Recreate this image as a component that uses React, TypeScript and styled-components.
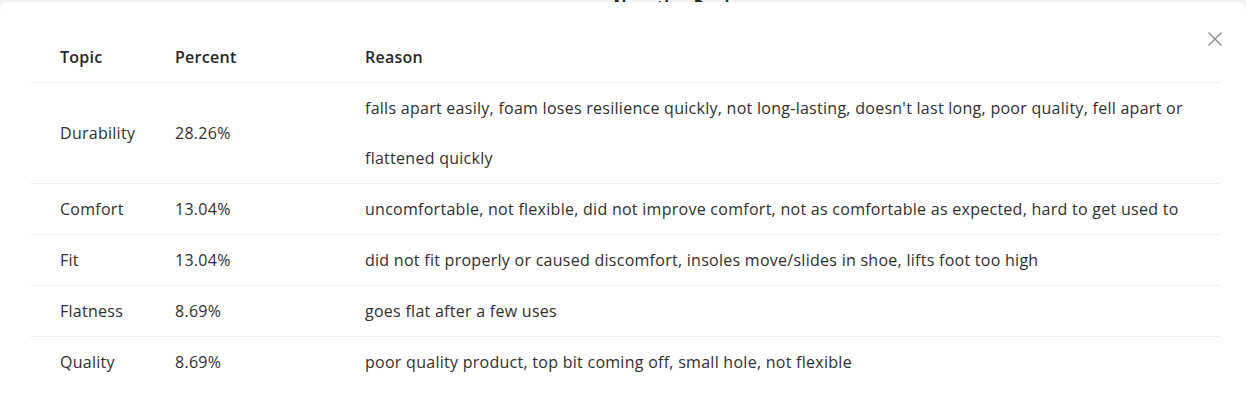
import React from "react";
import styled, { createGlobalStyle } from "styled-components";

const Global = createGlobalStyle`
  html, body { margin: 0; padding: 0; background: #f2f2f2; }
  body { font-family: "Open Sans", "Noto Sans", sans-serif; color: #333; }
`;

const Backdrop = styled.div`
  width: 1246px;
  height: 417px;
  overflow: hidden;
  display: flex;
  flex-direction: column;
`;

const PeekStrip = styled.div`
  height: 2px;
  overflow: hidden;
  display: flex;
  align-items: flex-end;
  justify-content: center;
  padding-left: 130px;
`;

const PeekText = styled.span`
  font-size: 16px;
  line-height: 16px;
  font-weight: 700;
  color: #222;
  margin-bottom: -12px;
  letter-spacing: 0.5px;
`;

const Modal = styled.div`
  flex: 1;
  background: #fff;
  border-radius: 8px 8px 0 0;
  padding: 30px 23px 0 30px;
  display: flex;
  flex-direction: column;
`;

const CloseButton = styled.button`
  align-self: flex-end;
  margin: -1px 0 -15px 0;
  width: 16px;
  height: 16px;
  padding: 0;
  border: none;
  background: none;
  cursor: pointer;
  display: flex;
  align-items: center;
  justify-content: center;
  position: relative;
  z-index: 1;
`;

const Table = styled.table`
  width: 1190px;
  border-collapse: collapse;
  table-layout: fixed;
  font-size: 16px;
  letter-spacing: 0.27px;
`;

const HeadCell = styled.th<{ $w?: number }>`
  text-align: left;
  font-weight: 600;
  color: #262626;
  height: 50px;
  padding: 0 30px;
  line-height: 50px;
  border-bottom: 1px solid #efefef;
  ${(p) => (p.$w ? `width: ${p.$w}px;` : "")}
  box-sizing: border-box;
`;

const Row = styled.tr<{ $last?: boolean }>`
  border-bottom: ${(p) => (p.$last ? "none" : "1px solid #efefef")};
`;

const Cell = styled.td`
  padding: 0 20px 0 30px;
  line-height: 50px;
  color: #2f2f2f;
  vertical-align: middle;
`;

const rows = [
  {
    topic: "Durability",
    pct: "28.26%",
    reason:
      "falls apart easily, foam loses resilience quickly, not long-lasting, doesn't last long, poor quality, fell apart or flattened quickly",
  },
  {
    topic: "Comfort",
    pct: "13.04%",
    reason:
      "uncomfortable, not flexible, did not improve comfort, not as comfortable as expected, hard to get used to",
  },
  {
    topic: "Fit",
    pct: "13.04%",
    reason:
      "did not fit properly or caused discomfort, insoles move/slides in shoe, lifts foot too high",
  },
  { topic: "Flatness", pct: "8.69%", reason: "goes flat after a few uses" },
  {
    topic: "Quality",
    pct: "8.69%",
    reason: "poor quality product, top bit coming off, small hole, not flexible",
  },
];

export default function App() {
  return (
    <>
      <Global />
      <Backdrop>
        <PeekStrip>
          <PeekText>Negative Reviews</PeekText>
        </PeekStrip>
        <Modal>
          <CloseButton aria-label="Close">
            <svg width="16" height="16" viewBox="0 0 16 16">
              <path d="M1.5 1.5 L14.5 14.5 M14.5 1.5 L1.5 14.5" stroke="#8a8a8a" strokeWidth="1.4" fill="none" />
            </svg>
          </CloseButton>
          <Table>
            <thead>
              <tr>
                <HeadCell $w={115}>Topic</HeadCell>
                <HeadCell $w={190}>Percent</HeadCell>
                <HeadCell>Reason</HeadCell>
              </tr>
            </thead>
            <tbody>
              {rows.map((r, i) => (
                <Row key={r.topic} $last={i === rows.length - 1}>
                  <Cell>{r.topic}</Cell>
                  <Cell>{r.pct}</Cell>
                  <Cell>{r.reason}</Cell>
                </Row>
              ))}
            </tbody>
          </Table>
        </Modal>
      </Backdrop>
    </>
  );
}
